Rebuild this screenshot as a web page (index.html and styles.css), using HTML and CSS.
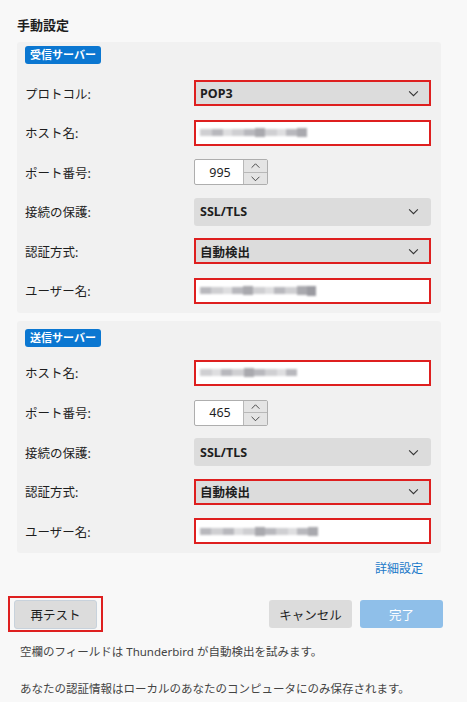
FILE: index.html
```html
<!DOCTYPE html>
<html lang="ja">
<head>
<meta charset="utf-8">
<title>手動設定</title>
<link rel="stylesheet" href="styles.css">
</head>
<body>
<main class="page">
  <h1 class="title">手動設定</h1>

  <section class="panel panel-in">
    <span class="badge">受信サーバー</span>
    <div class="rows">
      <div class="row">
        <span class="label">プロトコル:</span>
        <div class="select marked"><span>POP3</span><svg class="chev" viewBox="0 0 12 8"><path d="M1 1.5 6 6.5 11 1.5"/></svg></div>
      </div>
      <div class="row">
        <span class="label">ホスト名:</span>
        <div class="field marked"><span class="blur"><i class="b1"></i><i class="b2"></i><i class="b3"></i><i class="b1"></i><i class="b2"></i><i class="b4"></i><i class="b1"></i><i class="b3"></i><i class="b2"></i><i class="b4"></i></span></div>
      </div>
      <div class="row">
        <span class="label">ポート番号:</span>
        <div class="spin"><span class="num">995</span><span class="arrows"><svg viewBox="0 0 12 7"><path d="M1 6 6 1 11 6"/></svg><svg viewBox="0 0 12 7"><path d="M1 1 6 6 11 1"/></svg></span></div>
      </div>
      <div class="row">
        <span class="label">接続の保護:</span>
        <div class="select tall"><span>SSL/TLS</span><svg class="chev" viewBox="0 0 12 8"><path d="M1 1.5 6 6.5 11 1.5"/></svg></div>
      </div>
      <div class="row">
        <span class="label">認証方式:</span>
        <div class="select marked"><span>自動検出</span><svg class="chev" viewBox="0 0 12 8"><path d="M1 1.5 6 6.5 11 1.5"/></svg></div>
      </div>
      <div class="row">
        <span class="label">ユーザー名:</span>
        <div class="field marked"><span class="blur"><i class="b2"></i><i class="b1"></i><i class="b3"></i><i class="b2"></i><i class="b4"></i><i class="b1"></i><i class="b3"></i><i class="b2"></i><i class="b1"></i><i class="b4"></i><i class="b5"></i></span></div>
      </div>
    </div>
  </section>

  <section class="panel panel-out">
    <span class="badge">送信サーバー</span>
    <div class="rows">
      <div class="row">
        <span class="label">ホスト名:</span>
        <div class="field marked"><span class="blur"><i class="b1"></i><i class="b3"></i><i class="b2"></i><i class="b1"></i><i class="b4"></i><i class="b2"></i><i class="b1"></i><i class="b3"></i><i class="b2"></i></span></div>
      </div>
      <div class="row">
        <span class="label">ポート番号:</span>
        <div class="spin"><span class="num">465</span><span class="arrows"><svg viewBox="0 0 12 7"><path d="M1 6 6 1 11 6"/></svg><svg viewBox="0 0 12 7"><path d="M1 1 6 6 11 1"/></svg></span></div>
      </div>
      <div class="row">
        <span class="label">接続の保護:</span>
        <div class="select tall"><span>SSL/TLS</span><svg class="chev" viewBox="0 0 12 8"><path d="M1 1.5 6 6.5 11 1.5"/></svg></div>
      </div>
      <div class="row">
        <span class="label">認証方式:</span>
        <div class="select marked"><span>自動検出</span><svg class="chev" viewBox="0 0 12 8"><path d="M1 1.5 6 6.5 11 1.5"/></svg></div>
      </div>
      <div class="row">
        <span class="label">ユーザー名:</span>
        <div class="field marked"><span class="blur"><i class="b2"></i><i class="b1"></i><i class="b2"></i><i class="b3"></i><i class="b1"></i><i class="b4"></i><i class="b2"></i><i class="b1"></i><i class="b3"></i><i class="b2"></i><i class="b4"></i></span></div>
      </div>
    </div>
  </section>

  <div class="advanced"><a class="link" href="#">詳細設定</a></div>

  <div class="actions">
    <span class="mark"><button class="btn retest">再テスト</button></span>
    <div class="right">
      <button class="btn">キャンセル</button>
      <button class="btn primary">完了</button>
    </div>
  </div>

  <p class="note">空欄のフィールドは Thunderbird が自動検出を試みます。</p>
  <p class="note note2">あなたの認証情報はローカルのあなたのコンピュータにのみ保存されます。</p>
</main>
</body>
</html>
```

FILE: styles.css
```css
* { box-sizing: border-box; }
html, body {
  margin: 0;
  padding: 0;
  background: #f8f8f8;
}
body {
  font-family: "Noto Sans", "Noto Sans CJK JP", sans-serif;
  color: #1e1e1e;
  font-size: 12px;
}
.page {
  padding: 14px 26px 0 17px;
  width: 467px;
}
.title {
  margin: 0;
  font-size: 13px;
  font-weight: 700;
  line-height: 22px;
  height: 24px;
}
.panel {
  background: #f1f1f1;
  border-radius: 3px;
  padding: 4px 10px 9px 8px;
  width: 424px;
}
.panel-in { margin-top: 4px; }
.panel-out { margin-top: 8px; padding-top: 8px; padding-bottom: 9px; }
.badge {
  display: inline-block;
  background: #0b77d1;
  color: #fff;
  font-weight: 700;
  font-size: 11px;
  line-height: 18px;
  height: 18px;
  padding: 0 5px;
  border-radius: 3px;
}
.rows {
  display: flex;
  flex-direction: column;
  gap: 13.6px;
  margin-top: 16px;
}
.panel-out .rows { margin-top: 13px; }
.row {
  display: flex;
  align-items: center;
  height: 26px;
}
.label {
  width: 169px;
  font-size: 12.5px;
}
.select, .field {
  width: 237px;
  height: 26px;
  display: flex;
  align-items: center;
}
.select {
  background: #dcdcdc;
  border-radius: 3px;
  padding: 0 12px 0 6px;
  justify-content: space-between;
  font-weight: 700;
  font-size: 12.5px;
}
.select.tall { height: 28px; }
.select.marked {
  border: 2px solid #de1f1f;
  border-radius: 0;
  padding-left: 4px;
  padding-right: 10px;
}
.chev {
  width: 11px;
  height: 7px;
  fill: none;
  stroke: #333;
  stroke-width: 1.2;
}
.field {
  background: #fff;
  padding-left: 4px;
}
.field.marked { border: 2px solid #de1f1f; }
.blur {
  display: flex;
  align-items: center;
  height: 10px;
  filter: blur(0.8px);
}
.blur i {
  display: block;
  height: 7px;
  width: 12px;
}
.blur .b1 { background: #cfcfd2; }
.blur .b2 { background: #b8b8bd; width: 11px; }
.blur .b3 { background: #dedee0; width: 9px; }
.blur .b4 { background: #a9a9ae; height: 9px; width: 10px; }
.blur .b5 { background: #9a9aa0; height: 10px; width: 9px; }
.spin {
  display: flex;
  width: 74px;
  height: 26px;
  border: 1px solid #aeaeae;
  border-radius: 2px;
  background: #fff;
}
.num {
  width: 48px;
  display: flex;
  align-items: center;
  justify-content: center;
  font-size: 12.5px;
  padding-left: 2px;
}
.arrows {
  flex: 1;
  display: flex;
  flex-direction: column;
  background: #e4e4e4;
  border-left: 1px solid #b8b8b8;
}
.arrows svg {
  flex: 1;
  width: 100%;
  height: 12px;
  fill: none;
  stroke: #333;
  stroke-width: 1.1;
  padding: 3px 6px;
}
.arrows svg:first-child { border-bottom: 1px solid #b8b8b8; }
.advanced {
  display: flex;
  justify-content: flex-end;
  width: 406px;
  margin-top: 7px;
  height: 18px;
}
.link {
  color: #1a78c9;
  text-decoration: none;
  font-size: 12px;
  line-height: 18px;
}
.actions {
  display: flex;
  justify-content: space-between;
  align-items: flex-start;
  margin-top: 18px;
  margin-left: -9px;
  width: 435px;
}
.mark {
  display: block;
  border: 2px solid #de1f1f;
  padding: 2px 4px 1px;
}
.right { display: flex; gap: 8px; margin-top: 4px; }
.btn {
  display: block;
  font-family: inherit;
  font-size: 12.5px;
  height: 28px;
  width: 83px;
  border: none;
  border-radius: 3px;
  background: #dcdcdc;
  color: #1e1e1e;
  padding: 0;
}
.retest {
  height: 29px;
  border: 1px solid #c8d2dc;
}
.primary {
  background: #8fbfe9;
  color: #fff;
}
.note {
  margin: 11px 0 0 3px;
  font-size: 11.5px;
  color: #444;
  line-height: 18px;
}
.note2 { margin-top: 19px; }
```
